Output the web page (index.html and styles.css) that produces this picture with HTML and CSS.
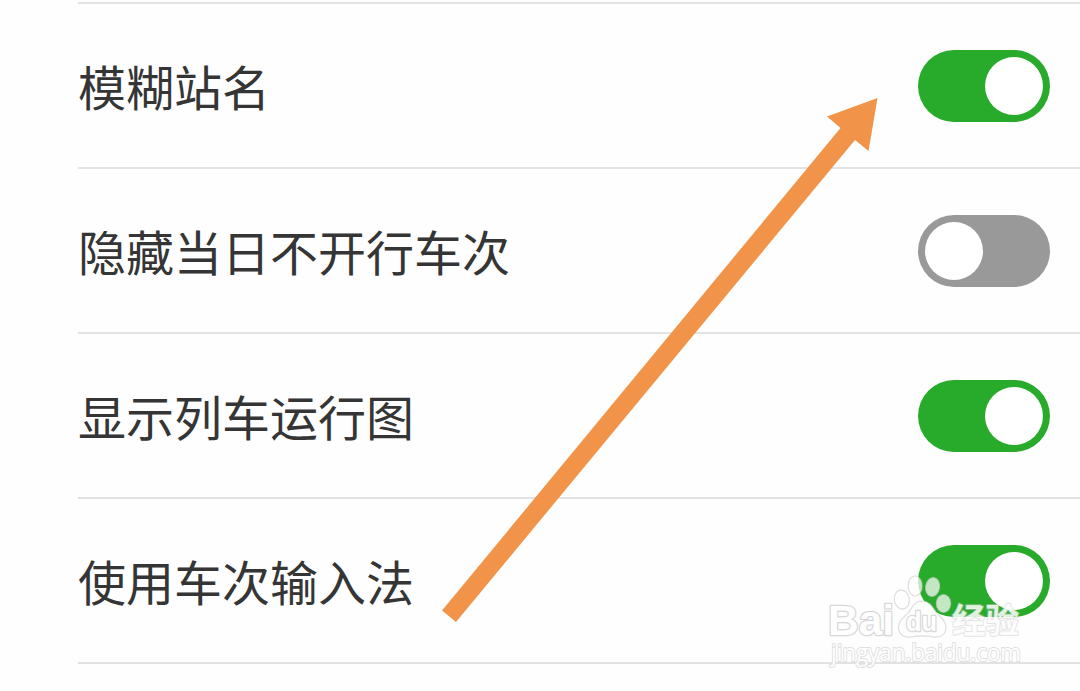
FILE: index.html
```html
<!DOCTYPE html>
<html lang="zh-CN">
<head>
  <meta charset="UTF-8" />
  <meta name="viewport" content="width=device-width, initial-scale=1.0"/>
  <title>设置</title>
  <link rel="stylesheet" href="styles.css">
</head>
<body>
  <div class="settings">
    <div class="row">
      <span class="label">模糊站名</span>
      <span class="switch on" role="switch" aria-checked="true"><span class="knob"></span></span>
    </div>
    <div class="row">
      <span class="label">隐藏当日不开行车次</span>
      <span class="switch" role="switch" aria-checked="false"><span class="knob"></span></span>
    </div>
    <div class="row">
      <span class="label">显示列车运行图</span>
      <span class="switch on" role="switch" aria-checked="true"><span class="knob"></span></span>
    </div>
    <div class="row">
      <span class="label">使用车次输入法</span>
      <span class="switch on" role="switch" aria-checked="true"><span class="knob"></span></span>
    </div>
  </div>

  <!-- Arrow pointing at the first switch -->
  <svg class="arrow" viewBox="0 0 1080 691">
    <polygon points="442,610.5 840.5,128 827,116.5 877.5,98 868.5,151 855,140 456,622" />
  </svg>

  <!-- Watermark -->
  <svg class="watermark" viewBox="820 570 210 115">
    <g class="mark">
      <ellipse cx="901.8" cy="599.5" rx="7.5" ry="9.5" transform="rotate(-12 901.8 599.5)" />
      <ellipse cx="915.2" cy="586" rx="7" ry="10" />
      <ellipse cx="932.6" cy="587" rx="7" ry="9.5" transform="rotate(10 932.6 587)" />
      <ellipse cx="943.5" cy="603.5" rx="7.2" ry="9" />
      <path class="pad" d="M922 601C915 601 912 607 909 612C905 617 898 620 898.500 628C899 635 905 638 911 637C918 635.500 926 635.500 933 637C940 638 946 635 946 627C946 620 940 617 936 612C932 606 929 601 922 601Z" />
      <text class="brand" x="828" y="635" textLength="66" lengthAdjust="spacingAndGlyphs">Bai</text>
      <text class="du" x="906" y="631" textLength="31" lengthAdjust="spacingAndGlyphs">du</text>
      <text class="jingyan" x="952" y="633" textLength="67" lengthAdjust="spacingAndGlyphs">经验</text>
      <text class="site" x="831" y="661" textLength="190" lengthAdjust="spacingAndGlyphs">jingyan.baidu.com</text>
    </g>
  </svg>
</body>
</html>
```
FILE: styles.css
```css
body {
  margin: 0;
  height: 691px;
  overflow: hidden;
  position: relative;
  background-color: #fefefe;
  color: #353535;
  font-family: "Noto Sans CJK SC", sans-serif;
}

.settings {
  margin-left: 78px;
  padding-top: 2px;
}

.row {
  display: flex;
  align-items: center;
  justify-content: space-between;
  box-sizing: border-box;
  height: 165px;
  padding-right: 30px;
  border-top: 2px solid #e2e2e2;
}

.row:last-child {
  height: 167px;
  border-bottom: 2px solid #e2e2e2;
}

.label {
  font-size: 48px;
  line-height: 72px;
  padding-bottom: 1px;
}

.switch {
  display: flex;
  box-sizing: border-box;
  width: 132px;
  height: 72px;
  padding: 7px;
  margin-top: 1px;
  border-radius: 36px;
  background-color: #999;
}

.switch.on {
  justify-content: flex-end;
  background-color: #28aa2a;
}

.knob {
  width: 58px;
  height: 58px;
  border-radius: 50%;
  background-color: #fff;
}

.arrow {
  position: absolute;
  top: 0;
  left: 0;
  width: 1080px;
  height: 691px;
  fill: #f2934a;
}

.watermark {
  position: absolute;
  left: 820px;
  top: 570px;
  width: 210px;
  height: 115px;
  overflow: visible;
}

.mark {
  fill: rgba(255, 255, 255, 0.72);
  stroke: rgba(200, 200, 200, 0.6);
  stroke-width: 1.2;
}

.pad {
  fill: #fefefe;
}

.mark text {
  fill: #fefefe;
  stroke: #d8d8d8;
  stroke-width: 2.6;
  stroke-linejoin: round;
  paint-order: stroke;
}

.brand {
  font: bold 43px "Liberation Sans", sans-serif;
}

.du {
  font: bold 27px "Liberation Sans", sans-serif;
}

.mark .jingyan {
  font: bold 34px "Noto Sans CJK SC", sans-serif;
  fill: rgba(255, 255, 255, 0.85);
  stroke: rgba(205, 205, 205, 0.5);
  stroke-width: 2;
}

.mark .site {
  font: 24px "Open Sans", sans-serif;
  stroke: #e0e0e0;
  stroke-width: 2;
}
```
